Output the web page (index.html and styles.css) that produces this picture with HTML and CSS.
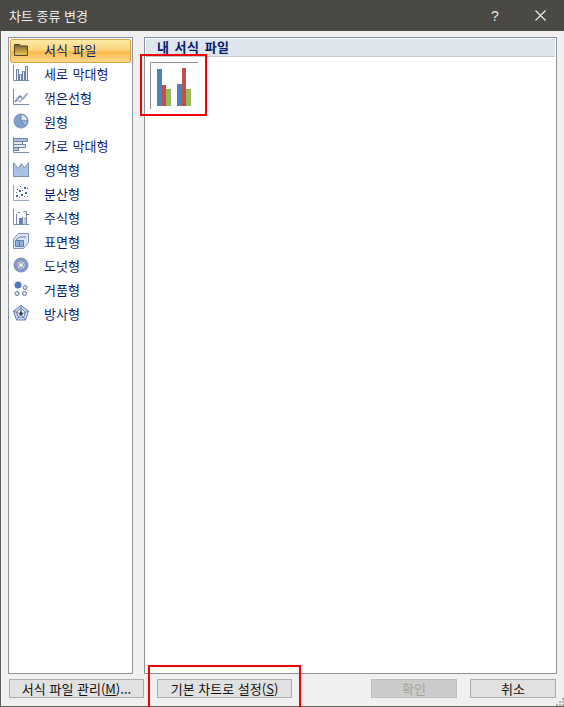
FILE: index.html
```html
<!DOCTYPE html>
<html lang="ko">
<head>
<meta charset="UTF-8" />
<title>차트 종류 변경</title>
<link rel="stylesheet" href="styles.css">
</head>
<body>
<div class="dialog">
  <header class="titlebar">
    <span class="title">차트 종류 변경</span>
    <span class="help">?</span>
    <svg class="close" width="11" height="11" viewBox="0 0 11 11"><path d="M.5.5l10 10M10.500.5l-10 10" stroke="#f2f2f2" stroke-width="1.1" fill="none"/></svg>
  </header>

  <div class="panels">
    <ul class="types">
      <li class="type selected">
        <svg class="icon" width="16" height="16" viewBox="0 0 16 16">
          <defs><linearGradient id="folder" x1="0" y1="0" x2="0" y2="1"><stop offset="0" stop-color="#6f5f35"/><stop offset=".5" stop-color="#b8923f"/><stop offset="1" stop-color="#f0c850"/></linearGradient></defs>
          <path d="M1.500 13.500V2.500h5l1 1.500h7v9.500z" fill="url(#folder)" stroke="#4d4530"/>
        </svg>
        서식 파일
      </li>
      <li class="type">
        <svg class="icon" width="16" height="16" viewBox="0 0 16 16"><path d="M.5 0v15.500H16" stroke="#7c8ba5" fill="none"/><path d="M3.500 4.500h2v11h-2zM6.500 9.500h2v6h-2zM9.500 6.500h2v9h-2zM12.500 1.500h2v14h-2z" fill="#dfe7f3" stroke="#6f82a3"/></svg>
        세로 막대형
      </li>
      <li class="type">
        <svg class="icon" width="16" height="16" viewBox="0 0 16 16"><path d="M.5 0v15.500H16" stroke="#7c8ba5" fill="none"/><path d="M2 13l5-6 3 3 4-5" stroke="#5f76a0" stroke-width="1.400" fill="none"/><path d="M3 9l4 4 3-4 5-5" stroke="#a9b8d2" stroke-width="1.400" fill="none"/></svg>
        꺾은선형
      </li>
      <li class="type">
        <svg class="icon" width="16" height="16" viewBox="0 0 16 16"><circle cx="8" cy="8" r="7" fill="#7f9fd0" stroke="#7a8fb5"/><path d="M8 8V1.500a6.500 6.500 0 0 1 6.500 6.500z" fill="#dbe5f3" stroke="#6f8ab5"/><path d="M8 8h6.500a6.500 6.500 0 0 1-2 4.700z" fill="#a9c0e2" stroke="#6f8ab5"/></svg>
        원형
      </li>
      <li class="type">
        <svg class="icon" width="16" height="16" viewBox="0 0 16 16"><path d="M.5 0v15.500H16" stroke="#7c8ba5" fill="none"/><path d="M.5 1.500h14v3H.5z" fill="#a9c0e2" stroke="#6f82a3"/><path d="M.5 4.500h9v3H.5z" fill="#dfe7f3" stroke="#6f82a3"/><path d="M.5 7.500h12v3H.5z" fill="#dfe7f3" stroke="#6f82a3"/><path d="M.5 10.500h5v3H.5z" fill="#a9c0e2" stroke="#6f82a3"/></svg>
        가로 막대형
      </li>
      <li class="type">
        <svg class="icon" width="16" height="16" viewBox="0 0 16 16"><path d="M.5 1.500l4.500 6 3.500-5 3 4.500 4-5.500v14H.5z" fill="#a9c2e6" stroke="#7c93bb"/><path d="M.5 15.500H16" stroke="#7c8ba5"/></svg>
        영역형
      </li>
      <li class="type">
        <svg class="icon" width="16" height="16" viewBox="0 0 16 16"><path d="M.5 0v15.500H16" stroke="#9aa6ba" fill="none"/><path d="M3 10h2v2H3zM6 5h2v2H6zM8 9h2v2H8zM11 2h2v2h-2zM12 7h2v2h-2zM4 4h1v1H4zM6 12h1v1H6zM9 5h1v1H9zM11 11h1v1h-1zM14 3h1v1h-1zM14 11h1v1h-1zM3 7h1v1H3zM7 1h1v1H7z" fill="#45659c"/></svg>
        분산형
      </li>
      <li class="type">
        <svg class="icon" width="16" height="16" viewBox="0 0 16 16"><path d="M.5 0v15.500H16" stroke="#7c8ba5" fill="none"/><path d="M3.500 5v10M9.500 8v7M13.500 2v13" stroke="#7c8ba5" fill="none"/><path d="M5 3.500h2M10.500 2.500h2M14 5.500h2" stroke="#7c8ba5"/><path d="M6 9h3v6.500H6z" fill="#5f83c4"/><path d="M11 9h2v6.500h-2z" fill="#dfe7f3" stroke="#7c8ba5" stroke-width=".6"/></svg>
        주식형
      </li>
      <li class="type">
        <svg class="icon" width="16" height="16" viewBox="0 0 16 16"><path d="M.5 6l5-5.500h10v9l-5 6H.5z" fill="#dbe5f3" stroke="#7c93bb"/><path d="M2.500 7.500h8v6h-8z" fill="#8fb0dd" stroke="#5f7cab"/><path d="M6.500 7.500v6M3 7l4-3h6" stroke="#5f7cab" fill="none"/></svg>
        표면형
      </li>
      <li class="type">
        <svg class="icon" width="16" height="16" viewBox="0 0 16 16"><circle cx="8" cy="8" r="5.500" fill="none" stroke="#8098c4" stroke-width="4"/><circle cx="8" cy="8" r="2.500" fill="#eef2f8" stroke="#7a869c"/></svg>
        도넛형
      </li>
      <li class="type">
        <svg class="icon" width="16" height="16" viewBox="0 0 16 16"><circle cx="5" cy="4" r="3.500" fill="#4f78c0"/><circle cx="12" cy="6.500" r="2" fill="#dbe5f3" stroke="#5b77a5"/><circle cx="4" cy="12.500" r="2" fill="#eef2f8" stroke="#5b77a5"/><circle cx="11.500" cy="12.500" r="2" fill="#dbe5f3" stroke="#5b77a5"/></svg>
        거품형
      </li>
      <li class="type">
        <svg class="icon" width="16" height="16" viewBox="0 0 16 16"><path d="M8 .5l7.500 5.500-3 9h-9L.5 6z" fill="#cfdcef" stroke="#5f7cab"/><path d="M8 3.500l4.500 3.300-1.800 5.500H5.300L3.500 6.800z" fill="#eef2f8" stroke="#5f7cab"/><path d="M8 .5V9M.5 6L8 9M15.500 6L8 9M3.500 15L8 9M12.500 15L8 9" stroke="#5f7cab" fill="none" stroke-width=".8"/><path d="M8 5.500l2 3.500-2 2-2-2z" fill="#3d3d3d"/></svg>
        방사형
      </li>
    </ul>

    <section class="gallery">
      <h2 class="gallery-head">내 서식 파일</h2>
      <div class="thumb">
        <svg width="49" height="47" viewBox="0 0 49 47"><path d="M.5 47V.5H48" stroke="#8c8c8c" fill="none"/><rect x="7" y="7" width="5" height="37" fill="#4f81bd"/><rect x="12" y="23" width="4" height="21" fill="#c0504d"/><rect x="16" y="27" width="5" height="17" fill="#9bbb59"/><rect x="27" y="22" width="5" height="22" fill="#4f81bd"/><rect x="32" y="6" width="4" height="38" fill="#c0504d"/><rect x="36" y="27" width="5" height="17" fill="#9bbb59"/></svg>
      </div>
    </section>
  </div>

  <footer class="actions">
    <button class="btn btn-wide"><span>서식 파일 관리(<u>M</u>)...</span></button>
    <button class="btn btn-wide btn-default"><span>기본 차트로 설정(<u>S</u>)</span></button>
    <button class="btn btn-ok" disabled>확인</button>
    <button class="btn btn-cancel">취소</button>
  </footer>

  <div class="mark mark-thumb"></div>
  <div class="mark mark-default"></div>
  <svg class="grip" width="8" height="8" viewBox="0 0 8 8"><path d="M6 0h2v2H6zM3 3h2v2H3zM6 3h2v2H6zM0 6h2v2H0zM3 6h2v2H3zM6 6h2v2H6z" fill="#b0b0b0"/></svg>
</div>
</body>
</html>
```

FILE: styles.css
```css
* {
  box-sizing: border-box;
}

html, body {
  margin: 0;
  height: 100%;
}

body {
  font-family: "Noto Sans CJK KR", "Liberation Sans", sans-serif;
  font-size: 13px;
  background: #f0f0f0;
  overflow: hidden;
}

.dialog {
  position: relative;
  display: flex;
  flex-direction: column;
  width: 564px;
  height: 707px;
  background: #f0f0f0;
  border-left: 1px solid #5f5f5c;
  border-bottom: 1px solid #5f5f5c;
}

.titlebar {
  display: flex;
  align-items: center;
  flex: none;
  height: 31px;
  margin-left: -1px;
  padding: 0 0 0 9px;
  background: #4a4945;
  color: #eeeeee;
}

.title {
  flex: 1;
  line-height: 30px;
}

.help {
  width: 14px;
  margin-right: 30px;
  font-family: "Liberation Sans", sans-serif;
  font-size: 14px;
  color: #e8e8e8;
}

.close {
  margin-right: 18px;
}

.panels {
  display: flex;
  flex: 1;
  gap: 11px;
  padding: 6px 7px 0 7px;
  min-height: 0;
}

.types {
  flex: none;
  width: 125px;
  margin: 0;
  padding: 1px;
  list-style: none;
  background: #fff;
  border: 1px solid #8d939c;
}

.type {
  display: flex;
  align-items: center;
  height: 24px;
  padding: 0 0 4px 3px;
  color: #0a1a6b;
  word-spacing: 1px;
}

.type .icon {
  flex: none;
  margin-right: 15px;
}

.selected {
  background: linear-gradient(#fde9a8 0%, #fcd67e 45%, #fbb94f 55%, #fdd98a 100%);
  border: 1px solid #d9a648;
  border-radius: 2px;
  padding: 0 0 3px 2px;
}

.gallery {
  flex: 1;
  background: #fff;
  border: 1px solid #8d939c;
  padding: 1px 1px 0;
}

.gallery-head {
  margin: 0;
  height: 18px;
  padding-left: 11px;
  font-size: 13px;
  font-weight: bold;
  line-height: 16px;
  letter-spacing: .5px;
  word-spacing: 1px;
  color: #0a1a6b;
  background: #dce6ec;
  border-bottom: 1px solid #c4c8cb;
}

.thumb {
  padding: 5px 0 0 4px;
  line-height: 0;
}

.actions {
  display: flex;
  flex: none;
  height: 32px;
  padding: 5px 0 0 8px;
}

.btn {
  height: 19px;
  padding: 0;
  font: inherit;
  line-height: 15px;
  color: #111;
  background: #e1e1e1;
  border: 1px solid #adadad;
}

.btn-wide {
  width: 135px;
}

.btn-default {
  margin-left: 13px;
}

.btn-ok {
  width: 86px;
  margin-left: 79px;
  background: #cccccc;
  border-color: #bfbfbf;
  color: #a3a39c;
}

.btn-cancel {
  width: 86px;
  margin-left: 13px;
}

.mark {
  position: absolute;
  border: 2px solid #f00000;
}

.mark-thumb {
  left: 139px;
  top: 54px;
  width: 67px;
  height: 62px;
}

.mark-default {
  left: 147px;
  top: 665px;
  width: 153px;
  height: 44px;
}

.grip {
  position: absolute;
  right: 0;
  bottom: 0;
}
```
